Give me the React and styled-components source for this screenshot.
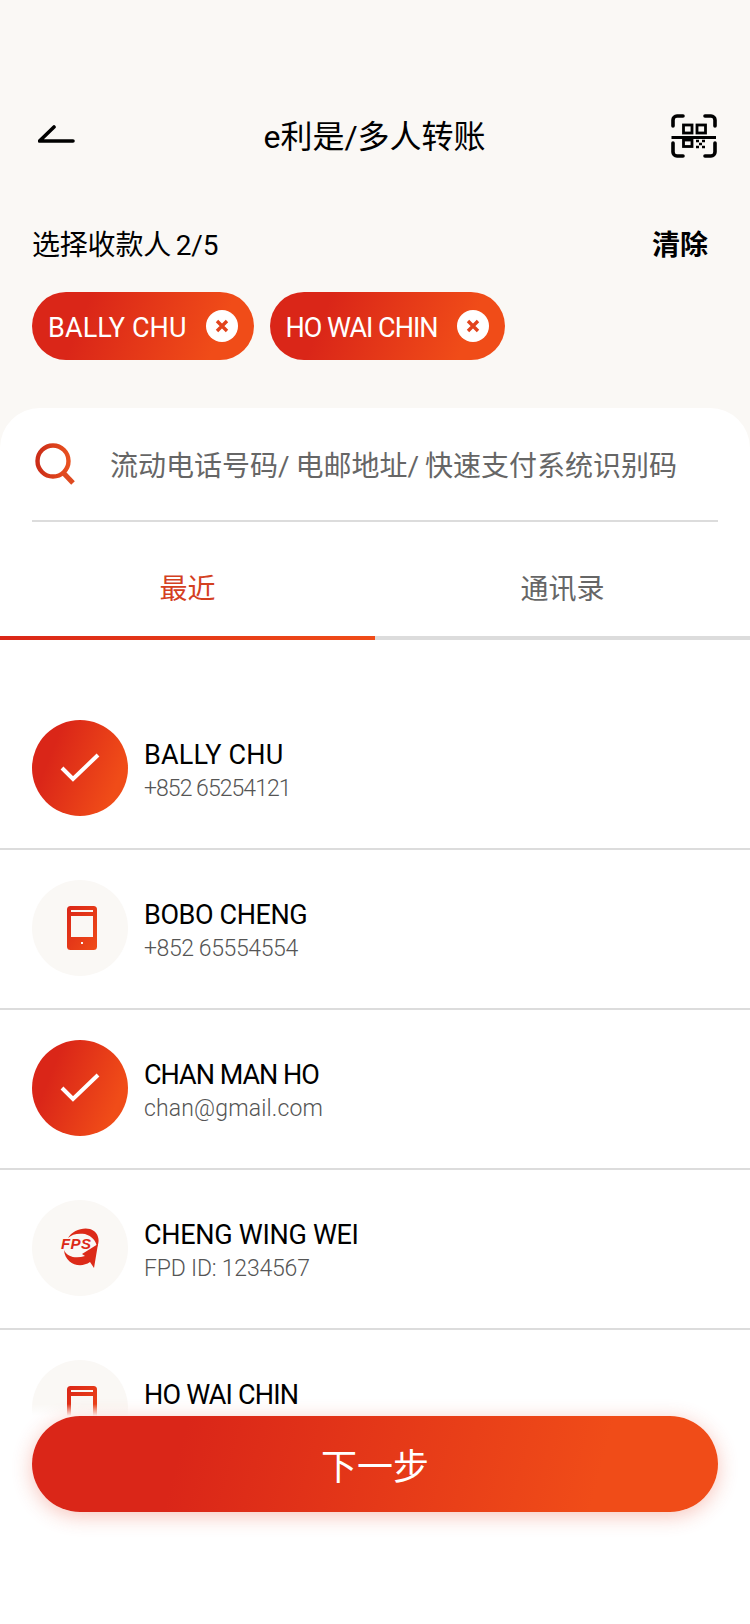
import React from "react";
import styled, { createGlobalStyle } from "styled-components";

const G = "linear-gradient(112deg, #da2618 24%, #f04c18 82%)";
const CJK = `"Roboto", "Noto Sans CJK SC", sans-serif`;
const LAT = `"Roboto", "Noto Sans CJK SC", sans-serif`;

const Global = createGlobalStyle`
  html, body { margin: 0; padding: 0; background: #fff; }
  * { box-sizing: border-box; }
`;

const Page = styled.div`
  position: relative;
  width: 750px;
  height: 1624px;
  overflow: hidden;
  background: #faf8f5;
  font-family: ${CJK};
  color: #000;
  display: flex;
  flex-direction: column;
`;
const Header = styled.header`
  display: flex;
  align-items: center;
  justify-content: space-between;
  height: 64px;
  margin-top: 105px;
  padding: 0 33px 0 38px;
`;
const Title = styled.h1`
  margin: 0;
  font-size: 32px;
  font-weight: 400;
  line-height: 64px;
`;
const BackSlot = styled.span`
  display: block;
  width: 40px;
  height: 46px;
  line-height: 0;
`;
const ScanSlot = styled.span`
  display: block;
  width: 46px;
  height: 46px;
  line-height: 0;
`;
const LabelRow = styled.div`
  display: flex;
  justify-content: space-between;
  align-items: center;
  height: 40px;
  margin-top: 54px;
  padding: 0 42px 0 32px;
  font-size: 28px;
`;
const Count = styled.span`
  word-spacing: -2px;
  letter-spacing: -0.2px;
`;
const Clear = styled.span`
  font-weight: 700;
`;
const Chips = styled.div`
  display: flex;
  gap: 16px;
  margin-top: 29px;
  padding: 0 32px;
`;
const Chip = styled.div`
  display: flex;
  align-items: center;
  height: 68px;
  padding: 0 16px 0 16px;
  border-radius: 34px;
  background: ${G};
  color: #fff;
`;
const ChipName = styled.span`
  font-family: ${LAT};
  font-size: 27px;
  padding-top: 3px;
  margin-right: 19px;
  letter-spacing: ${(p) => p.$track}px;
`;
const ChipX = styled.span`
  width: 32px;
  height: 32px;
  border-radius: 50%;
  background: #fff;
  display: flex;
  align-items: center;
  justify-content: center;
`;
const Sheet = styled.main`
  flex: 1;
  margin-top: 48px;
  background: #fff;
  border-radius: 40px 40px 0 0;
  display: flex;
  flex-direction: column;
  min-height: 0;
`;
const Search = styled.div`
  display: flex;
  align-items: center;
  gap: 35px;
  height: 114px;
  margin: 0 32px;
  padding: 0 0 0 3px;
  border-bottom: 2px solid #dcdcdc;
  font-size: 28px;
  color: #666;
`;
const Placeholder = styled.span`
  word-spacing: -1px;
  white-space: nowrap;
`;
const Tabs = styled.div`
  display: flex;
`;
const Tab = styled.div`
  flex: 1;
  height: 118px;
  display: flex;
  align-items: center;
  justify-content: center;
  padding-top: 16px;
  font-size: 28px;
  color: ${(p) => (p.$active ? "#d4401f" : "#666")};
  border-bottom: 4px solid #dcdcdc;
  border-image: ${(p) => (p.$active ? "linear-gradient(90deg,#da2618,#f04c18) 1" : "none")};
`;
const List = styled.ul`
  list-style: none;
  margin: 50px 0 0;
  padding: 0;
  background: #fff;
`;
const Row = styled.li`
  display: flex;
  align-items: center;
  gap: 16px;
  height: 160px;
  padding: 0 32px 2px;
  border-bottom: 2px solid #dcdcdc;
`;
const Avatar = styled.div`
  width: 96px;
  height: 96px;
  border-radius: 50%;
  flex: none;
  display: flex;
  align-items: center;
  justify-content: center;
  background: ${(p) => (p.$on ? G : "#faf8f5")};
`;
const Info = styled.div`
  display: flex;
  flex-direction: column;
  padding-top: 7px;
`;
const Name = styled.div`
  font-family: ${LAT};
  font-size: 27px;
  line-height: 34px;
  color: #000;
  letter-spacing: ${(p) => p.$track}px;
`;
const Sub = styled.div`
  font-family: ${LAT};
  font-size: 23px;
  font-weight: 300;
  line-height: 32px;
  padding-top: 1px;
  color: #555;
  letter-spacing: ${(p) => p.$track}px;
`;
const Footer = styled.div`
  position: absolute;
  left: 0;
  right: 0;
  top: 1404px;
  bottom: 0;
  padding: 12px 32px 0;
  background: linear-gradient(180deg, rgba(255,255,255,0) 0, #fff 12px);
`;
const Next = styled.button`
  display: block;
  width: 100%;
  height: 96px;
  border: 0;
  border-radius: 48px;
  background: linear-gradient(105deg, #da2618 22%, #f04c18 82%);
  box-shadow: 0 4px 20px rgba(230, 60, 30, 0.3);
  color: #fff;
  font-family: ${CJK};
  font-size: 36px;
`;

const Back = () => (
  <BackSlot>
    <svg width="40" height="46" viewBox="0 0 40 46" fill="none">
      <path d="M16 13 L1.5 27 H35" stroke="#000" strokeWidth="3.6" strokeLinecap="round" strokeLinejoin="round" />
    </svg>
  </BackSlot>
);

const Scan = () => (
  <ScanSlot>
    <svg width="46" height="46" viewBox="0 0 46 46" fill="none" stroke="#000">
      <path d="M12 2H6a4 4 0 0 0-4 4v6M34 2h6a4 4 0 0 1 4 4v6M2 29v9a4 4 0 0 0 4 4h6M44 29v9a4 4 0 0 1-4 4h-6" strokeWidth="3.6" strokeLinecap="round" />
      <path d="M0.5 23.5H45" strokeWidth="3" />
      <rect x="12.5" y="11" width="8.5" height="8" strokeWidth="2.8" />
      <rect x="26" y="11" width="8.5" height="8" strokeWidth="2.8" />
      <rect x="12.5" y="26" width="8.5" height="6.5" strokeWidth="2.8" />
      <path d="M25 27h3M31 27h3M28 30h3M25 33h3M31 33h3" strokeWidth="2.6" />
    </svg>
  </ScanSlot>
);

const Xmark = () => (
  <svg width="14" height="14" viewBox="0 0 14 14">
    <path d="M2 2L12 12M12 2L2 12" stroke="#e2431c" strokeWidth="3.4" />
  </svg>
);

const SearchIcon = () => (
  <svg width="40" height="44" viewBox="0 0 40 44" fill="none" style={{ flex: "none" }}>
    <defs>
      <linearGradient id="sg" x1="0" y1="0" x2="1" y2="0">
        <stop offset="0" stopColor="#cb2d18" />
        <stop offset="1" stopColor="#e8501f" />
      </linearGradient>
    </defs>
    <circle cx="18" cy="19" r="15.5" stroke="url(#sg)" strokeWidth="4.4" />
    <path d="M28.5 31L38 41" stroke="#de4a20" strokeWidth="5" />
  </svg>
);

const Check = () => (
  <svg width="40" height="30" viewBox="0 0 40 30" fill="none">
    <path d="M2 15L13 26L38 2" stroke="#fff" strokeWidth="4" />
  </svg>
);

const Phone = ({ id }) => (
  <svg width="33" height="44" viewBox="0 0 33 44">
    <defs>
      <linearGradient id={id} x1="0" y1="0" x2="1" y2="1">
        <stop offset="0" stopColor="#da2618" />
        <stop offset="1" stopColor="#f04c18" />
      </linearGradient>
    </defs>
    <rect x="3" width="30" height="44" rx="3.5" fill={`url(#${id})`} />
    <rect x="7" y="4" width="22" height="2" fill="#faf8f5" />
    <rect x="7" y="10" width="22" height="21" fill="#faf8f5" />
    <rect x="17" y="36" width="2" height="2" fill="#faf8f5" />
  </svg>
);

const Fps = () => (
  <svg width="40" height="40" viewBox="0 0 40 40">
    <path d="M8 10C12 3 22 -1 30 1C37 3 41 11 37 19C36 13 32 8 25 6C18 5 12 6 8 10Z" fill="#dc2a18" />
    <path d="M4 22C7 29 16 31 25 28L22 26L38 16L34 40L30 34C20 41 5 36 4 22Z" fill="#dc2a18" />
    <text x="1" y="20.5" fontFamily="'Liberation Sans', sans-serif" fontSize="15" fontWeight="700" fontStyle="italic" fill="#dc2a18" stroke="#faf8f5" strokeWidth="1.2" paintOrder="stroke" textLength="30">FPS</text>
  </svg>
);

const chips = [
  { name: "BALLY CHU", track: 0.1 },
  { name: "HO WAI CHIN", track: -1 },
];

const people = [
  { name: "BALLY CHU", track: 0.2, sub: "+852 65254121", subTrack: -0.95, on: true },
  { name: "BOBO CHENG", track: -0.4, sub: "+852 65554554", subTrack: -0.4, icon: "phone" },
  { name: "CHAN MAN HO", track: -1, sub: "chan@gmail.com", subTrack: 0.15, on: true },
  { name: "CHENG WING WEI", track: -0.3, sub: "FPD ID: 1234567", subTrack: -0.2, icon: "fps" },
  { name: "HO WAI CHIN", track: -0.8, sub: "+852 65254121", subTrack: -0.95, icon: "phone" },
];

export default function App() {
  return (
    <Page>
      <Global />
      <Header>
        <Back />
        <Title>e利是/多人转账</Title>
        <Scan />
      </Header>
      <LabelRow>
        <Count>选择收款人 2/5</Count>
        <Clear>清除</Clear>
      </LabelRow>
      <Chips>
        {chips.map((c) => (
          <Chip key={c.name}>
            <ChipName $track={c.track}>{c.name}</ChipName>
            <ChipX><Xmark /></ChipX>
          </Chip>
        ))}
      </Chips>
      <Sheet>
        <Search>
          <SearchIcon />
          <Placeholder>流动电话号码/ 电邮地址/ 快速支付系统识别码</Placeholder>
        </Search>
        <Tabs>
          <Tab $active>最近</Tab>
          <Tab>通讯录</Tab>
        </Tabs>
        <List>
          {people.map((p, i) => (
            <Row key={p.name}>
              <Avatar $on={p.on}>
                {p.on ? <Check /> : p.icon === "fps" ? <Fps /> : <Phone id={`ph${i}`} />}
              </Avatar>
              <Info>
                <Name $track={p.track}>{p.name}</Name>
                <Sub $track={p.subTrack}>{p.sub}</Sub>
              </Info>
            </Row>
          ))}
        </List>
      </Sheet>
      <Footer>
        <Next>下一步</Next>
      </Footer>
    </Page>
  );
}
